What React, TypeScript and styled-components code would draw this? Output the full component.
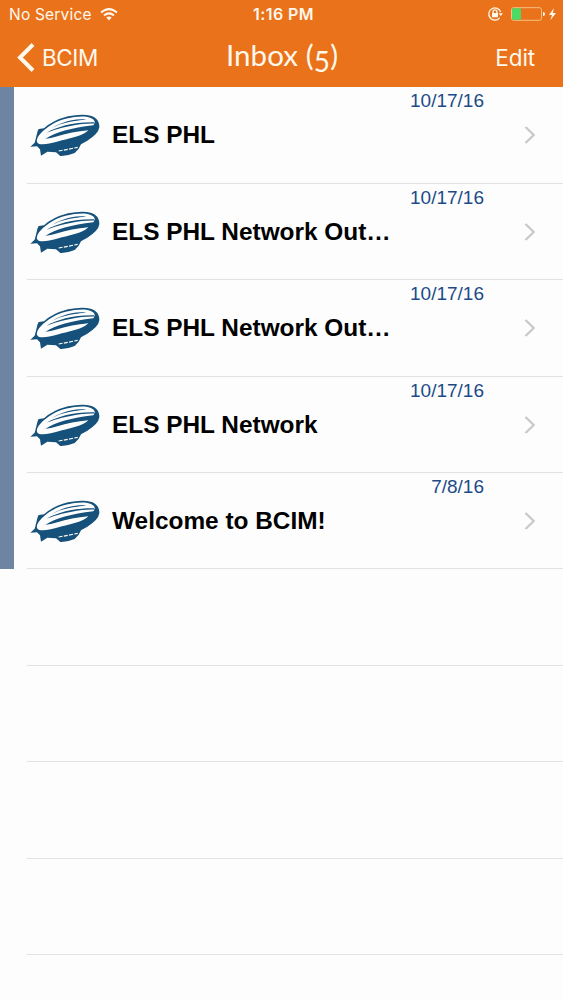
import React from 'react';
import styled, { createGlobalStyle } from 'styled-components';

const GlobalStyle = createGlobalStyle`
  * { box-sizing: border-box; }
  body { margin: 0; background: #fdfdfd; overflow: hidden; }
`;

const Screen = styled.main`
  width: 563px;
  height: 1000px;
  overflow: hidden;
  background: #fdfdfd;
  font-family: "Liberation Sans", Arial, sans-serif;
`;

const Header = styled.header`
  height: 87px;
  background: #ea721b;
  color: #fff8ec;
  font-family: Inter, sans-serif;
`;

const StatusBar = styled.div`
  display: grid;
  grid-template-columns: 1fr 64px 1fr;
  align-items: center;
  height: 29px;
  padding: 0 6px 0 9px;
  white-space: nowrap;
`;

const Carrier = styled.div`
  display: flex;
  align-items: center;
  gap: 8px;
  font-size: 15.5px;
  line-height: 20px;
  letter-spacing: 0.2px;
`;

const Clock = styled.div`
  font-size: 16px;
  line-height: 20px;
  padding: 0 0 1px 1px;
  font-weight: 600;
  letter-spacing: 0.45px;
  text-align: center;
`;

const Indicators = styled.div`
  display: flex;
  justify-content: flex-end;
  align-items: center;
  padding-bottom: 1px;
`;

const NavBar = styled.nav`
  display: grid;
  grid-template-columns: 1fr 130px 1fr;
  align-items: center;
  height: 57px;
  padding: 0 28px 0 17px;
`;

const NavButton = styled.button<{ $end?: boolean }>`
  display: flex;
  align-items: center;
  justify-self: ${(p) => (p.$end ? 'end' : 'start')};
  gap: 7px;
  padding: 0;
  border: 0;
  background: none;
  color: inherit;
  font: 400 22.5px/30px Inter, sans-serif;
  letter-spacing: ${(p) => (p.$end ? '-0.1px' : '-0.4px')};
`;

const Title = styled.h1`
  margin: 0 -6px 6px 6px;
  font: 400 29.5px/36px Lato, sans-serif;
  letter-spacing: 0.1px;
  text-align: center;
  white-space: nowrap;
`;

const LowNumeral = styled.span`
  position: relative;
  top: 6px;
  font-size: 28px;
`;

const List = styled.ul`
  margin: 0;
  padding: 0.4px 0 0;
  list-style: none;
`;

const Row = styled.li<{ $filled?: boolean }>`
  display: flex;
  height: 96.4px;
  border-left: 14px solid ${(p) => (p.$filled ? '#6d84a2' : 'transparent')};
  padding-left: 13px;
`;

const RowBody = styled.div`
  display: grid;
  grid-template-columns: 85px 372px 1fr;
  grid-template-rows: 27px 42px 1fr;
  flex: 1;
  border-bottom: 1px solid #e2e1e5;
`;

const DateLabel = styled.time`
  grid-column: 1 / 3;
  justify-self: end;
  font-size: 19px;
  line-height: 28px;
  color: #1c4b88;
`;

const Subject = styled.div`
  grid-column: 2;
  grid-row: 2;
  align-self: center;
  font-size: 24.4px;
  line-height: 30px;
  font-weight: 700;
  color: #000;
  white-space: nowrap;
`;

const Avatar = styled.svg`
  grid-column: 1;
  grid-row: 2;
  align-self: center;
  margin-left: 2px;
`;

const Disclosure = styled.svg`
  grid-column: 3;
  grid-row: 2;
  align-self: center;
  margin-left: 40px;
`;

const Zeppelin = () => (
  <Avatar width="72" height="44" viewBox="27 24 216 132">
    <path fill="#15517a" d="M46 106 L53 78 Q54 70 62 71 L72 70 Q98 46 144 34 Q186 25 212 32 C230 37 239 50 238 67 Q235 87 202 107 L183 118 Q178 133 164 144 Q140 154 121 153 L108 142 L82 140 L63 152 L60 133 L51 124 L31 125 L44 113 Z" />
    <path fill="#fdfdfd" d="M51 111 C47 97 68 75 98 57 C128 40 174 31 203 36 C217 39 226 46 224 54 L218 65 L200 80 C188 91 154 99 126 106 Q77 121 58 117 Q53 116 51 111 Z" />
    <g fill="#15517a">
      <path d="M96 69 C122 52 158 42 199 42 C194 45 168 47 147 51 C126 55 109 62 96 69Z" />
      <path d="M80 83 C109 66 160 51 222 52 L224 56 C205 55 180 57 155 62 C124 67 101 75 80 83Z" />
      <path d="M76 101 C106 83 154 68 220 61 L234 67 L222 88 L184 98 L166 102 C188 92 201 83 205 76 C171 79 140 85 112 94 Q91 101 76 101Z" />
    </g>
    <path d="M116 138 Q144 133 173 127" fill="none" stroke="#fdfdfd" strokeWidth="3.5" strokeDasharray="12 4" />
  </Avatar>
);

const Chevron = () => (
  <Disclosure width="12" height="18" viewBox="0 0 12 18">
    <path d="M1.5 1 L9.7 9 L1.5 17" fill="none" stroke="#c7c7cc" strokeWidth="2.2" />
  </Disclosure>
);

const Wifi = () => (
  <svg width="18" height="13" viewBox="0 0 18 13" fill="none" stroke="currentColor" strokeWidth="2">
    <path d="M1 4.6 Q9 -2.4 17 4.6" />
    <path d="M4 7.6 Q9 3.2 14 7.6" />
    <path d="M6.3 9.6 Q9 7.5 11.7 9.6 L9 12.4Z" fill="currentColor" stroke="none" />
  </svg>
);

const StatusIcons = () => (
  <svg width="70" height="18" viewBox="0 0 70 18">
    <g fill="none" stroke="#fff8ec" strokeWidth="1.3">
      <path d="M12.7 12.8 A6.1 6.1 0 1 1 13.7 7.1" />
      <rect x="24.5" y="2.7" width="30" height="12.6" rx="2" stroke="#f5c184" strokeWidth="1" />
      <path d="M6.1 8.5 V6.8 A1.9 1.9 0 0 1 9.9 6.8 V8.5" />
    </g>
    <path d="M11.5 8.2 H16 L13.8 11Z M5 8 H11 V12.3 H5Z M56 7 Q58 7 58 9 Q58 11 56 11Z" fill="#fff8ec" />
    <rect x="25" y="3.2" width="9" height="11.6" rx="1" fill="#4cd964" />
    <path d="M67 3 L62 10 H65 L63.3 15.3 L69 8 H65.8Z" fill="#fff8ec" />
  </svg>
);

const messages = [
  { date: '10/17/16', subject: 'ELS PHL' },
  { date: '10/17/16', subject: 'ELS PHL Network Out…' },
  { date: '10/17/16', subject: 'ELS PHL Network Out…' },
  { date: '10/17/16', subject: 'ELS PHL Network' },
  { date: '7/8/16', subject: 'Welcome to BCIM!' },
];

export default function App() {
  return (
    <Screen>
      <GlobalStyle />
      <Header>
        <StatusBar>
          <Carrier>No Service <Wifi /></Carrier>
          <Clock>1:16 PM</Clock>
          <Indicators><StatusIcons /></Indicators>
        </StatusBar>
        <NavBar>
          <NavButton>
            <svg width="18" height="29" viewBox="0 0 18 29">
              <path d="M16 1.5 L3 14.5 L16 27.5" fill="none" stroke="currentColor" strokeWidth="4" />
            </svg>
            BCIM
          </NavButton>
          <Title>Inbox (<LowNumeral>5</LowNumeral>)</Title>
          <NavButton $end>Edit</NavButton>
        </NavBar>
      </Header>
      <List>
        {messages.map((message, index) => (
          <Row key={index} $filled>
            <RowBody>
              <DateLabel>{message.date}</DateLabel>
              <Zeppelin />
              <Subject>{message.subject}</Subject>
              <Chevron />
            </RowBody>
          </Row>
        ))}
        {Array.from({ length: 5 }, (_, index) => (
          <Row key={index}><RowBody /></Row>
        ))}
      </List>
    </Screen>
  );
}
